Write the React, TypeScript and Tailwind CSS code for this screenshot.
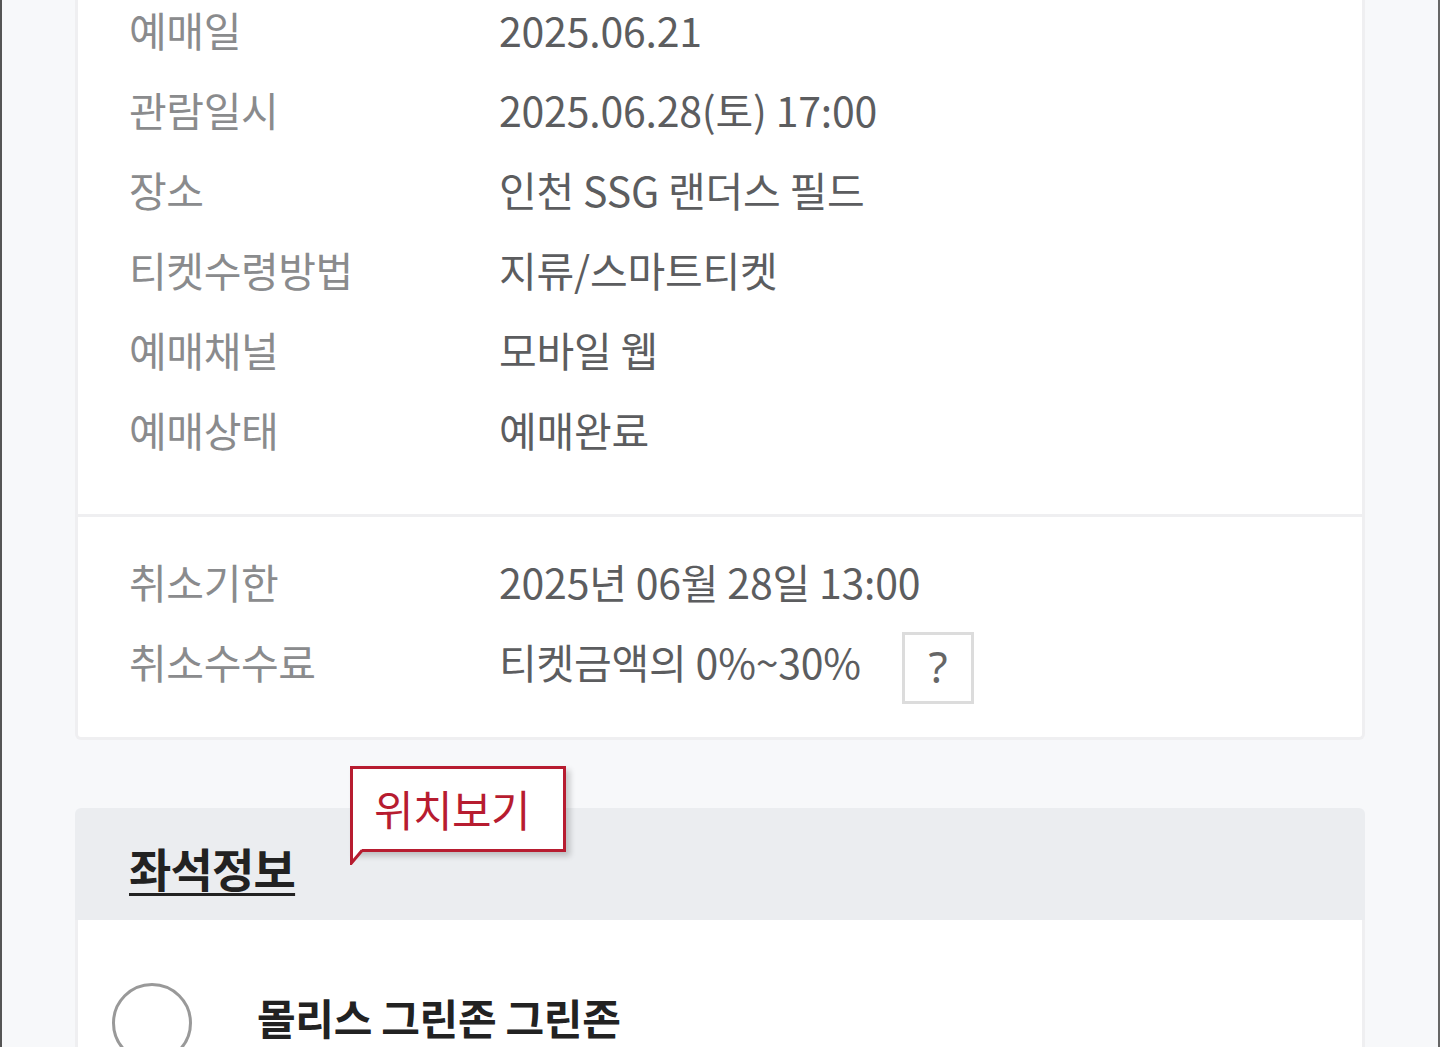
import React from "react";

const font = { fontFamily: '"Noto Sans CJK KR", "Noto Sans", sans-serif' };

function Row({ label, value, extra }: { label: string; value: string; extra?: React.ReactNode }) {
  return (
    <div className="flex h-[80px] items-center pb-[4px]">
      <div className="w-[421px] pl-[51px] text-[41px] text-[#8a8b8d] tracking-[-0.4px]">{label}</div>
      <div className="flex items-center text-[41px] text-[#5c5d5f] tracking-[-0.2px]">
        {value}
        {extra}
      </div>
    </div>
  );
}

export default function App() {
  return (
    <div style={font} className="relative h-[1047px] w-[1440px] overflow-hidden bg-[#f7f8fa] border-l-2 border-r-2 border-l-[#555] border-r-[#666]">
      <div className="ml-[73px] mr-[73px]">
        {/* top card */}
        <div className="rounded-b-[6px] border-[3px] border-t-0 border-[#efeff1] bg-white">
          <div className="-mt-[8px] pb-[42px]">
            <Row label="예매일" value="2025.06.21" />
            <Row label="관람일시" value="2025.06.28(토) 17:00" />
            <Row label="장소" value="인천 SSG 랜더스 필드" />
            <Row label="티켓수령방법" value="지류/스마트티켓" />
            <Row label="예매채널" value="모바일 웹" />
            <Row label="예매상태" value="예매완료" />
          </div>
          <div className="h-[3px] bg-[#efeff1]" />
          <div className="pt-[27px] pb-[33px]">
            <Row label="취소기한" value="2025년 06월 28일 13:00" />
            <Row
              label="취소수수료"
              value="티켓금액의 0%~30%"
              extra={
                <div className="ml-[41px] mt-[12px] flex h-[72px] w-[72px] items-center justify-center border-[3px] border-[#dcdcdc] bg-white pb-[4px] text-[44px] text-[#666]" style={{ fontFamily: '"Noto Sans", sans-serif' }}>
                  ?
                </div>
              }
            />
          </div>
        </div>

        {/* seat info */}
        <div className="relative mt-[68px]">
          <div className="flex h-[112px] items-center rounded-t-[6px] bg-[#ebedf0] pl-[54px] pt-[6px]">
            <span className="text-[46px] font-bold text-[#222] underline decoration-[3px] underline-offset-[6px] tracking-[-0.8px]">
              좌석정보
            </span>
          </div>
          <div className="border-x-[3px] border-[#efeff1] bg-white pt-[63px] pb-[40px]">
            <div className="flex items-center">
              <div className="ml-[34px] h-[80px] w-[80px] rounded-full border-[3px] border-[#999]" />
              <span className="ml-[65px] -mt-[14px] text-[42px] font-bold text-[#222] tracking-[-0.3px]">몰리스 그린존 그린존</span>
            </div>
          </div>

          {/* tooltip */}
          <div className="absolute left-[275px] -top-[42px]">
            <div className="relative flex h-[86px] w-[216px] items-center justify-center border-[3px] border-[#b71c30] bg-white pb-[2px] pr-[12px] text-[43px] text-[#b71c30] shadow-[4px_4px_6px_rgba(0,0,0,0.2)] tracking-[-0.5px]">
              위치보기
            </div>
            <svg className="absolute left-0 top-[83px]" width="14" height="16" viewBox="0 0 14 16">
              <polygon points="0,0 12,0 1.5,14" fill="white" />
              <polyline points="1.5,0 1.5,14 12,1.5" fill="none" stroke="#b71c30" strokeWidth="3" />
            </svg>
          </div>
        </div>
      </div>
    </div>
  );
}
